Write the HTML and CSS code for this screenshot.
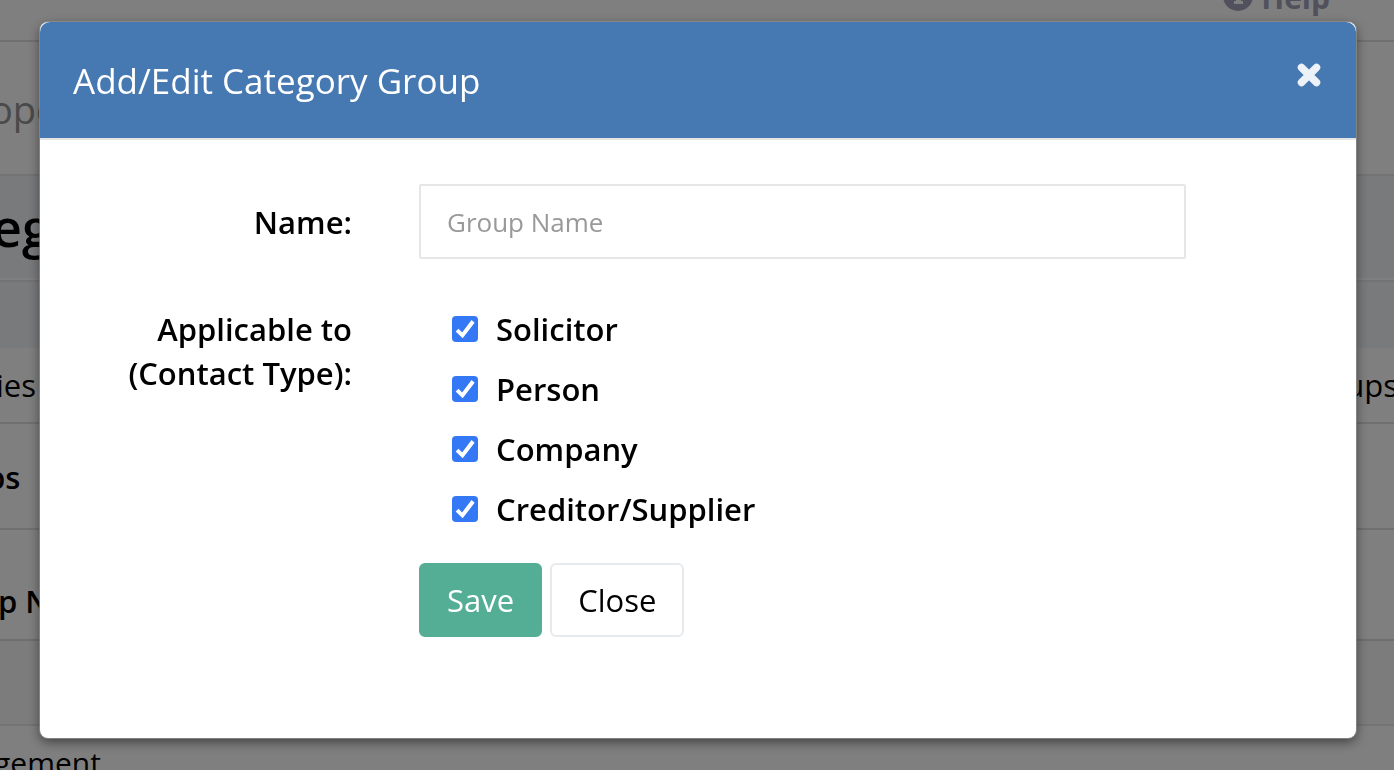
FILE: index.html
```
<!DOCTYPE html>
<html lang="en">
<head>
  <meta charset="UTF-8">
  <meta name="viewport" content="width=device-width, initial-scale=1.0">
  <title>Category Groups</title>
  <link rel="stylesheet" href="styles.css">
</head>
<body>
  <div class="page">
    <div class="topbar">
      <a href="#" class="help">
        <svg class="help-icon" width="30" height="30" viewBox="0 0 30 30">
          <circle cx="15" cy="15" r="15" fill="#a0a2b8"/>
          <path d="M12 5h6v4h-6zM11 11h7v9h2v3h-9v-3h2v-6h-2z" fill="#fff"/>
        </svg>
        Help
      </a>
    </div>
    <div class="nav">ope</div>
    <div class="page-title">eg</div>
    <div class="spacer"></div>
    <div class="crumbs"><span>ies</span><span>ups</span></div>
    <div class="panel-title">ps</div>
    <div class="table-head">p N</div>
    <div class="table-row"></div>
    <div class="table-foot">gement</div>
  </div>

  <div class="modal-overlay">
    <div class="modal" role="dialog" aria-labelledby="modalTitle">
      <div class="modal-header">
        <h2 id="modalTitle">Add/Edit Category Group</h2>
        <button type="button" class="close" aria-label="Close dialog">
          <svg width="24" height="24" viewBox="0 0 24 24">
            <path d="M4.500 4.500L19.500 19.500M19.500 4.500L4.500 19.500" stroke="#edf2f8" stroke-width="7.500" stroke-linecap="round"/>
          </svg>
        </button>
      </div>
      <form class="modal-body">
        <label class="field-label" for="groupName">Name:</label>
        <input type="text" class="text-input" id="groupName" placeholder="Group Name">
        <div class="field-label types-label" id="typesLabel">Applicable to (Contact Type):</div>
        <div class="types" role="group" aria-labelledby="typesLabel">
          <label class="check"><input type="checkbox" checked> Solicitor</label>
          <label class="check"><input type="checkbox" checked> Person</label>
          <label class="check"><input type="checkbox" checked> Company</label>
          <label class="check"><input type="checkbox" checked> Creditor/Supplier</label>
        </div>
        <div class="actions">
          <button type="button" class="btn btn-save">Save</button>
          <button type="button" class="btn btn-close">Close</button>
        </div>
      </form>
    </div>
  </div>
</body>
</html>
```
FILE: styles.css
```
* {
  box-sizing: border-box;
}
body {
  margin: 0;
  font-family: 'Open Sans', sans-serif;
  font-size: 31px;
  line-height: 44px;
  color: #000;
  background: #fff;
  height: 100vh;
  overflow: hidden;
}

/* page behind the dialog */
.page {
  overflow: hidden;
  white-space: nowrap;
}
.topbar {
  height: 42px;
  display: flex;
  justify-content: flex-end;
  align-items: flex-end;
  padding: 0 64px 20px 0;
  border-bottom: 2px solid #e0e0e0;
}
.help {
  display: flex;
  align-items: center;
  gap: 8px;
  font-size: 30px;
  font-weight: 700;
  color: #a0a2b8;
  text-decoration: none;
}
.help-icon {
  margin-bottom: 4px;
}
.nav {
  height: 134px;
  padding-top: 45px;
  font-size: 38px;
  color: #949494;
  text-indent: -10px;
  border-bottom: 2px solid #e7e7e7;
}
.page-title {
  height: 104px;
  padding-top: 29px;
  font-size: 52px;
  font-weight: 600;
  text-indent: -8px;
  background: #f3f5f8;
  border-bottom: 2px solid #fff;
}
.spacer {
  height: 68px;
  background: #f3f5f8;
  border-top: 2px solid #e7e7e7;
}
.crumbs {
  height: 76px;
  padding-top: 15px;
  display: flex;
  justify-content: space-between;
  margin: 0 -4px;
  border-bottom: 2px solid #e0e0e0;
}
.panel-title {
  height: 106px;
  padding-top: 31px;
  font-weight: 600;
  text-indent: -14px;
  border-bottom: 2px solid #e0e0e0;
}
.table-head {
  height: 111px;
  padding-top: 49px;
  font-weight: 600;
  text-indent: -2px;
  border-bottom: 2px solid #ddd;
}
.table-row {
  height: 85px;
  background: #f9f9f9;
  border-bottom: 2px solid #e7e7e7;
}
.table-foot {
  padding-top: 15px;
  font-size: 30px;
  text-indent: -6px;
}

/* dialog */
.modal-overlay {
  position: fixed;
  inset: 0;
  padding: 22px 38px 32px 40px;
  background: rgba(0, 0, 0, 0.5);
}
.modal {
  height: 100%;
  background: #fff;
  border-radius: 8px;
  box-shadow: 0 0 0 1px rgba(140, 140, 140, 0.8), 0 4px 12px rgba(0, 0, 0, 0.5);
}
.modal-header {
  display: flex;
  justify-content: space-between;
  align-items: flex-start;
  padding: 35px 33px 33px;
  background: #4678b2;
  border-bottom: 2px solid #e5e5e5;
  background-clip: padding-box;
  border-radius: 10px 10px 0 0;
}
.modal-header h2 {
  margin: 0;
  font-size: 35px;
  font-weight: 400;
  line-height: 48px;
  color: #fff;
}
.close {
  padding: 6px 2px;
  border: 0;
  background: none;
  line-height: 0;
  cursor: pointer;
}
.modal-body {
  display: grid;
  grid-template-columns: 272px 1fr;
  column-gap: 67px;
  padding: 44px 170px 0 40px;
}
.field-label {
  padding-top: 16px;
  font-weight: 600;
  text-align: right;
}
.types-label {
  padding-top: 48px;
}
.text-input {
  width: 100%;
  height: 75px;
  padding: 0 26px;
  border: 2px solid #e5e6e7;
  border-radius: 2px;
  font: inherit;
  font-size: 26px;
  color: #000;
}
.text-input::placeholder {
  color: #999;
}
.types {
  display: flex;
  flex-direction: column;
  gap: 16px;
  padding: 48px 0 0 33px;
}
.check {
  display: flex;
  align-items: center;
  gap: 18px;
  font-weight: 600;
}
.check input {
  appearance: none;
  width: 26px;
  height: 26px;
  margin: 0;
  border-radius: 4px;
  background: #3478f6;
}
.check input:checked::before {
  content: '';
  display: block;
  width: 26px;
  height: 26px;
  background: #fff;
  clip-path: polygon(14% 60%, 25% 49%, 39% 63%, 75% 15%, 87% 26%, 41% 86%);
}
.actions {
  grid-column: 2;
  display: flex;
  gap: 8px;
  padding-top: 32px;
}
.btn {
  height: 74px;
  padding: 0 26px;
  border: 2px solid #e7eaec;
  border-radius: 6px;
  font: inherit;
  cursor: pointer;
}
.btn-save {
  color: #fff;
  background: #54ae95;
  border-color: #54ae95;
}
.btn-close {
  color: #000;
  background: #fff;
}
```
